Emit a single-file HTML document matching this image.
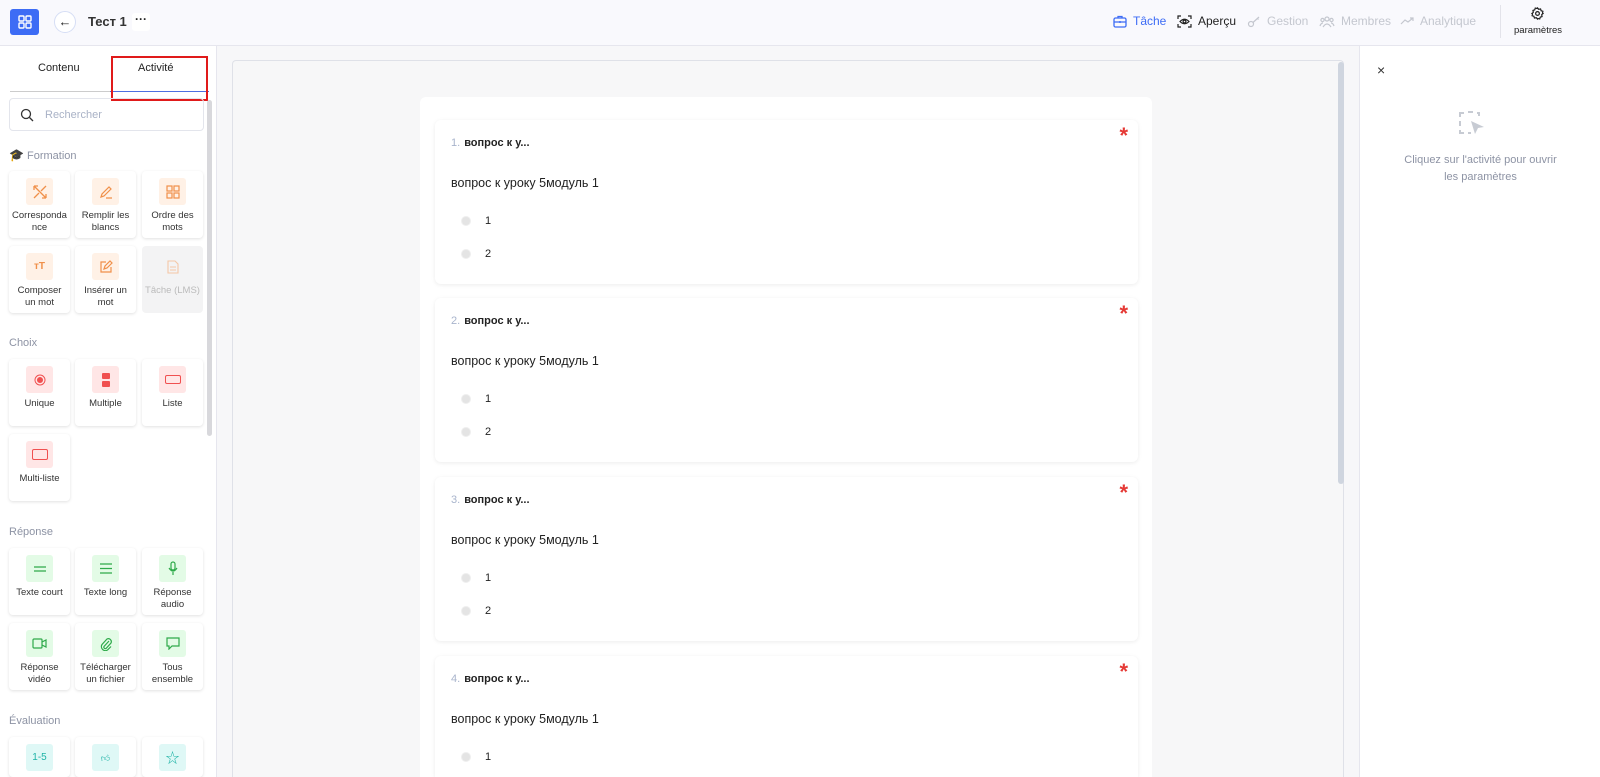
<!DOCTYPE html>
<html><head><meta charset="utf-8"><style>
*{box-sizing:border-box;margin:0;padding:0}
html,body{width:1600px;height:777px;overflow:hidden}
body{font-family:"Liberation Sans","Noto Sans CJK SC",sans-serif;background:#f7f7f9;position:relative;color:#222}
.hdr{position:absolute;left:0;top:0;width:1600px;height:46px;background:#f9f9fd;border-bottom:1px solid #e6e6ee}
.abs{position:absolute}
.side{position:absolute;left:0;top:46px;width:217px;height:731px;background:#fff;border-right:1px solid #e6e6ee}
.tile{position:absolute;width:61px;height:67px;background:#fff;border-radius:4px;box-shadow:0 1px 3px rgba(0,0,0,.12);text-align:center;font-size:9.5px;line-height:12px;color:#333}
.tile .ic{width:27px;height:27px;margin:7px auto 5px;border-radius:3px;display:flex;align-items:center;justify-content:center}
.o .ic{background:#fff1e6}.r .ic{background:#ffe6e6}.g .ic{background:#e3fbe6}.t .ic{background:#dff8f6}
.sec{position:absolute;left:9px;font-size:11px;color:#8d93a4}
.nav{position:absolute;top:14px;font-size:12px;display:flex;align-items:center;gap:6px}
.card{position:absolute;left:435px;width:703px;height:164px;background:#fff;border-radius:6px;box-shadow:0 1px 4px rgba(0,0,0,.08)}
.card .q{position:absolute;left:16px;top:17px;font-size:11px;font-weight:bold}
.card .q span{color:#a8b4cc;font-weight:normal;margin-right:4px}
.card .st{position:absolute;right:10px;top:3px;color:#e53935;font-size:22px;font-weight:bold}
.card .tx{position:absolute;left:16px;top:56px;font-size:12.5px}
.card .op{position:absolute;left:26px;font-size:11px;display:flex;align-items:center;gap:14px}
.rd{width:10px;height:10px;border-radius:50%;background:#e4e4e4;border:1px solid #eee}
</style></head><body>
<div class="hdr">
 <div class="abs" style="left:10px;top:9px;width:29px;height:26px;background:#3d6cf5;border-radius:3px;display:flex;align-items:center;justify-content:center">
  <svg width="14" height="14" viewBox="0 0 14 14" fill="none" stroke="#fff" stroke-width="1.4"><rect x="1" y="1" width="5" height="5" rx="1"/><rect x="8" y="1" width="5" height="5" rx="1"/><rect x="1" y="8" width="5" height="5" rx="1"/><rect x="8" y="8" width="5" height="5" rx="1"/></svg></div>
 <div class="abs" style="left:54px;top:11px;width:22px;height:22px;border-radius:50%;background:#fff;border:1px solid #d6def5;text-align:center;font-size:13px;line-height:20px">←</div>
 <div class="abs" style="left:88px;top:14px;font-size:13px;font-weight:bold;color:#333">Тест 1</div>
 <div class="abs" style="left:132px;top:13px;width:18px;height:18px;background:#fff;border-radius:3px;font-size:12px;line-height:13px;text-align:center;font-weight:bold">···</div>
 <div class="nav" style="left:1113px;color:#3d6cf5"><svg width="14" height="13" viewBox="0 0 14 13" fill="none" stroke="#3d6cf5" stroke-width="1.3"><rect x="1" y="3" width="12" height="9" rx="1.5"/><path d="M5 3V1.5h4V3M1 7h12M7 6v2"/></svg>Tâche</div>
 <div class="nav" style="left:1177px;color:#222"><svg width="15" height="13" viewBox="0 0 15 13" fill="none" stroke="#222" stroke-width="1.2"><path d="M1 4V1h3M11 1h3v3M14 9v3h-3M4 12H1V9"/><path d="M3 6.5Q7.5 2 12 6.5Q7.5 11 3 6.5z"/><circle cx="7.5" cy="6.5" r="1.4"/></svg>Aperçu</div>
 <div class="nav" style="left:1247px;color:#c4c7cf"><svg width="14" height="13" viewBox="0 0 14 13" fill="none" stroke="#c4c7cf" stroke-width="1.2"><circle cx="4" cy="9" r="2.5"/><path d="M6 7.5L12 2M10 3l1.5 1.5"/></svg>Gestion</div>
 <div class="nav" style="left:1319px;color:#c4c7cf"><svg width="16" height="13" viewBox="0 0 16 13" fill="none" stroke="#c4c7cf" stroke-width="1.2"><circle cx="8" cy="4" r="2"/><circle cx="3.5" cy="5" r="1.6"/><circle cx="12.5" cy="5" r="1.6"/><path d="M4 12q4-6 8 0M1 11q1-3 3-3M15 11q-1-3-3-3"/></svg>Membres</div>
 <div class="nav" style="left:1400px;color:#c4c7cf"><svg width="14" height="10" viewBox="0 0 14 10" fill="none" stroke="#c4c7cf" stroke-width="1.2"><path d="M1 8l4-4 3 2 5-4M10 2h3v3"/></svg>Analytique</div>
 <div class="abs" style="left:1500px;top:5px;width:1px;height:33px;background:#e3e3ea"></div>
 <div class="abs" style="left:1531px;top:7px"><svg width="13" height="13" viewBox="0 0 14 14" fill="none" stroke="#222" stroke-width="1.3"><circle cx="7" cy="7" r="2"/><path d="M7 1l1.3 1.5 2-.4.6 1.9 1.9.6-.4 2L13 7l-1.5 1.3.4 2-1.9.6-.6 1.9-2-.4L7 13l-1.3-1.5-2 .4-.6-1.9-1.9-.6.4-2L1 7l1.5-1.3-.4-2 1.9-.6.6-1.9 2 .4z"/></svg></div>
 <div class="abs" style="left:1514px;top:25px;font-size:9.5px;color:#222">paramètres</div>
</div>

<div class="side">
 <div class="abs" style="left:38px;top:16px;font-size:11px;color:#222">Contenu</div>
 <div class="abs" style="left:138px;top:16px;font-size:11px;color:#222">Activité</div>
 <div class="abs" style="left:10px;top:45px;width:100px;height:1px;background:#ccc"></div>
 <div class="abs" style="left:110px;top:45px;width:99px;height:1px;background:#4d6fe0"></div>
 <div class="abs" style="left:111px;top:10px;width:97px;height:45px;border:2px solid #e01a1a"></div>
 <div class="abs" style="left:207px;top:54px;width:5px;height:336px;background:#d8d8dc;border-radius:3px"></div>
 <div class="abs" style="left:9px;top:52px;width:195px;height:33px;border:1px solid #e3e5ec;border-radius:4px">
  <svg class="abs" style="left:10px;top:9px" width="14" height="14" viewBox="0 0 14 14" fill="none" stroke="#333" stroke-width="1.3"><circle cx="6" cy="6" r="4.5"/><path d="M9.5 9.5L13 13"/></svg>
  <div class="abs" style="left:35px;top:10px;font-size:11px;color:#a9b2c6">Rechercher</div></div>
 <div class="sec" style="top:102px"><span style="font-size:12px">🎓</span> Formation</div>
</div>
<div class="sec" style="top:337px">Choix</div>
<div class="sec" style="top:526px">Réponse</div>
<div class="sec" style="top:715px">Évaluation</div>

<div class="tile o" style="left:9px;top:171px"><div class="ic"><svg width="14" height="14" viewBox="0 0 14 14" fill="none" stroke="#f0904a" stroke-width="1.3"><path d="M1 1l12 12M1 1v4M1 1h4M13 1L8 6M13 13v-4M13 13h-4M6 8l-5 5"/></svg></div>Corresponda<br>nce</div>
<div class="tile o" style="left:75px;top:171px"><div class="ic"><svg width="14" height="14" viewBox="0 0 14 14" fill="none" stroke="#f0904a" stroke-width="1.2"><path d="M2 12l1-3 7-7 2 2-7 7zM7 13h6"/></svg></div>Remplir les<br>blancs</div>
<div class="tile o" style="left:142px;top:171px"><div class="ic"><svg width="14" height="14" viewBox="0 0 14 14" fill="none" stroke="#f0904a" stroke-width="1.2"><rect x="1" y="1" width="5" height="5"/><rect x="8" y="1" width="5" height="5"/><rect x="1" y="8" width="5" height="5"/><rect x="8" y="8" width="5" height="5"/></svg></div>Ordre des<br>mots</div>
<div class="tile o" style="left:9px;top:246px"><div class="ic" style="color:#f0904a;font-size:10px;font-weight:bold">тT</div>Composer<br>un mot</div>
<div class="tile o" style="left:75px;top:246px"><div class="ic"><svg width="14" height="14" viewBox="0 0 14 14" fill="none" stroke="#f0904a" stroke-width="1.2"><path d="M7 2H2v10h10V7M5 9l1-3 5-5 2 2-5 5z"/></svg></div>Insérer un<br>mot</div>
<div class="tile" style="left:142px;top:246px;background:#f3f3f4;box-shadow:none;color:#bbb"><div class="ic"><svg width="12" height="14" viewBox="0 0 12 14" fill="none" stroke="#f4c7a6" stroke-width="1.1"><path d="M1 1h7l3 3v9H1zM3 7h6M3 10h6"/></svg></div>Tâche (LMS)</div>

<div class="tile r" style="left:9px;top:359px"><div class="ic"><svg width="12" height="12"><circle cx="6" cy="6" r="5" fill="none" stroke="#f05050"/><circle cx="6" cy="6" r="3" fill="#f05050"/></svg></div>Unique</div>
<div class="tile r" style="left:75px;top:359px"><div class="ic"><svg width="8" height="14"><rect x="0" y="0" width="8" height="6" rx="1" fill="#f05050"/><rect x="0" y="8" width="8" height="6" rx="1" fill="#f05050"/></svg></div>Multiple</div>
<div class="tile r" style="left:142px;top:359px"><div class="ic"><svg width="16" height="9"><rect x=".5" y=".5" width="15" height="8" rx="1.5" fill="none" stroke="#f05050"/></svg></div>Liste</div>
<div class="tile r" style="left:9px;top:434px"><div class="ic"><svg width="16" height="11"><rect x=".5" y=".5" width="15" height="10" rx="1.5" fill="none" stroke="#f05050"/></svg></div>Multi-liste</div>

<div class="tile g" style="left:9px;top:548px"><div class="ic"><svg width="12" height="8" stroke="#2eaa4a" stroke-width="1.3"><path d="M0 2h12M0 6h12"/></svg></div>Texte court</div>
<div class="tile g" style="left:75px;top:548px"><div class="ic"><svg width="12" height="11" stroke="#2eaa4a" stroke-width="1.3"><path d="M0 1h12M0 5.5h12M0 10h12"/></svg></div>Texte long</div>
<div class="tile g" style="left:142px;top:548px"><div class="ic"><svg width="10" height="15" fill="none" stroke="#2eaa4a" stroke-width="1.2"><rect x="3" y="1" width="4" height="8" rx="2"/><path d="M1 7q4 6 8 0M5 11v3"/></svg></div>Réponse<br>audio</div>
<div class="tile g" style="left:9px;top:623px"><div class="ic"><svg width="15" height="11" fill="none" stroke="#2eaa4a" stroke-width="1.2"><rect x="1" y="1" width="9" height="9" rx="1"/><path d="M10 4l4-2v7l-4-2"/></svg></div>Réponse<br>vidéo</div>
<div class="tile g" style="left:75px;top:623px"><div class="ic"><svg width="12" height="14" fill="none" stroke="#2eaa4a" stroke-width="1.2"><path d="M9 4L4 9.5a1.5 1.5 0 0 0 2 2L11 6a3 3 0 0 0-4-4L2 7.5a4 4 0 0 0 5.5 5.5L11 9.5"/></svg></div>Télécharger<br>un fichier</div>
<div class="tile g" style="left:142px;top:623px"><div class="ic"><svg width="14" height="13" fill="none" stroke="#2eaa4a" stroke-width="1.2"><path d="M1 1h12v8H6l-3 3V9H1z"/></svg></div>Tous<br>ensemble</div>

<div class="tile t" style="left:9px;top:737px;height:40px"><div class="ic" style="color:#1fb3a6;font-size:10px">1-5</div></div>
<div class="tile t" style="left:75px;top:737px;height:40px"><div class="ic" style="color:#1fb3a6;font-size:9px">👍︎</div></div>
<div class="tile t" style="left:142px;top:737px;height:40px"><div class="ic" style="color:#1fb3a6;font-size:14px">☆</div></div>

<div class="abs" style="left:232px;top:60px;width:1112px;height:717px;background:#f7f7f8;border:1px solid #dfe1e8;border-bottom:none;border-radius:4px 4px 0 0"></div>
<div class="abs" style="left:1338px;top:62px;width:6px;height:422px;background:#cfd5df;border-radius:3px"></div>
<div class="abs" style="left:420px;top:97px;width:732px;height:680px;background:#fff;border-radius:6px 6px 0 0"></div>

<div class="card" style="top:120px"><div class="q"><span>1.</span>вопрос к у...</div><div class="st">*</div><div class="tx">вопрос к уроку 5модуль 1</div><div class="op" style="top:95px"><div class="rd"></div>1</div><div class="op" style="top:128px"><div class="rd"></div>2</div></div>
<div class="card" style="top:298px"><div class="q"><span>2.</span>вопрос к у...</div><div class="st">*</div><div class="tx">вопрос к уроку 5модуль 1</div><div class="op" style="top:95px"><div class="rd"></div>1</div><div class="op" style="top:128px"><div class="rd"></div>2</div></div>
<div class="card" style="top:477px"><div class="q"><span>3.</span>вопрос к у...</div><div class="st">*</div><div class="tx">вопрос к уроку 5модуль 1</div><div class="op" style="top:95px"><div class="rd"></div>1</div><div class="op" style="top:128px"><div class="rd"></div>2</div></div>
<div class="card" style="top:656px;height:121px;border-radius:6px 6px 0 0"><div class="q"><span>4.</span>вопрос к у...</div><div class="st">*</div><div class="tx">вопрос к уроку 5модуль 1</div><div class="op" style="top:95px"><div class="rd"></div>1</div></div>

<div class="abs" style="left:1359px;top:46px;width:241px;height:731px;background:#fff;border-left:1px solid #e6e6ee">
 <div class="abs" style="left:17px;top:16px;font-size:14px;color:#333">×</div>
 <svg class="abs" style="left:97px;top:63px" width="30" height="30" viewBox="0 0 30 30" fill="none"><path d="M3 8V4h4M11 3h5M20 4h2v3M3 12v5M3 21v3h4M11 24h3" stroke="#c7cbd3" stroke-width="2"/><path d="M14 12l13 6-6 1-3 6z" fill="#c7cbd3"/></svg>
 <div class="abs" style="left:0;top:106px;width:241px;text-align:center;font-size:11px;line-height:17px;color:#8d93a4">Cliquez sur l'activité pour ouvrir<br>les paramètres</div>
</div>
</body></html>
